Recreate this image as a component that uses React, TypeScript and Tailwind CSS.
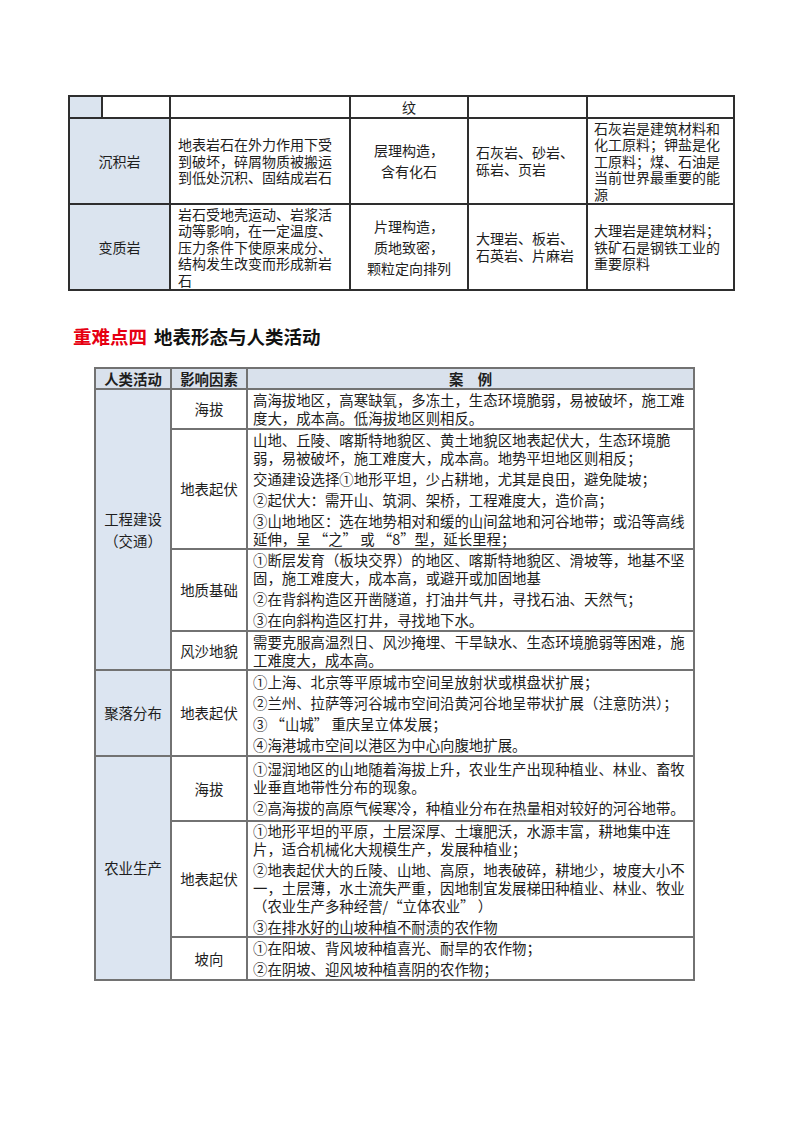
import React from 'react';

const font = { fontFamily: '"Noto Sans CJK SC", "Noto Sans", sans-serif' };

interface Factor {
  name: string;
  height: number;
  paras: string[][];
}

interface Activity {
  name: string[];
  factors: Factor[];
}

const activities: Activity[] = [
  {
    name: ['工程建设', '（交通）'],
    factors: [
      {
        name: '海拔',
        height: 40,
        paras: [['高海拔地区，高寒缺氧，多冻土，生态环境脆弱，易被破坏，施工难', '度大，成本高。低海拔地区则相反。']],
      },
      {
        name: '地表起伏',
        height: 120,
        paras: [
          ['山地、丘陵、喀斯特地貌区、黄土地貌区地表起伏大，生态环境脆', '弱，易被破坏，施工难度大，成本高。地势平坦地区则相反；'],
          ['交通建设选择①地形平坦，少占耕地，尤其是良田，避免陡坡；'],
          ['②起伏大：需开山、筑洞、架桥，工程难度大，造价高；'],
          ['③山地地区：选在地势相对和缓的山间盆地和河谷地带；或沿等高线', '延伸，呈 “之” 或 “8”型，延长里程；'],
        ],
      },
      {
        name: '地质基础',
        height: 82,
        paras: [
          ['①断层发育（板块交界）的地区、喀斯特地貌区、滑坡等，地基不坚', '固，施工难度大，成本高，或避开或加固地基'],
          ['②在背斜构造区开凿隧道，打油井气井，寻找石油、天然气；'],
          ['③在向斜构造区打井，寻找地下水。'],
        ],
      },
      {
        name: '风沙地貌',
        height: 39,
        paras: [['需要克服高温烈日、风沙掩埋、干旱缺水、生态环境脆弱等困难，施', '工难度大，成本高。']],
      },
    ],
  },
  {
    name: ['聚落分布'],
    factors: [
      {
        name: '地表起伏',
        height: 86,
        paras: [
          ['①上海、北京等平原城市空间呈放射状或棋盘状扩展；'],
          ['②兰州、拉萨等河谷城市空间沿黄河谷地呈带状扩展（注意防洪）；'],
          ['③ “山城” 重庆呈立体发展；'],
          ['④海港城市空间以港区为中心向腹地扩展。'],
        ],
      },
    ],
  },
  {
    name: ['农业生产'],
    factors: [
      {
        name: '海拔',
        height: 65,
        paras: [
          ['①湿润地区的山地随着海拔上升，农业生产出现种植业、林业、畜牧', '业垂直地带性分布的现象。'],
          ['②高海拔的高原气候寒冷，种植业分布在热量相对较好的河谷地带。'],
        ],
      },
      {
        name: '地表起伏',
        height: 114,
        paras: [
          ['①地形平坦的平原，土层深厚、土壤肥沃，水源丰富，耕地集中连', '片，适合机械化大规模生产，发展种植业；'],
          ['②地表起伏大的丘陵、山地、高原，地表破碎，耕地少，坡度大小不', '一，土层薄，水土流失严重，因地制宜发展梯田种植业、林业、牧业', '（农业生产多种经营/“立体农业” ）'],
          ['③在排水好的山坡种植不耐渍的农作物'],
        ],
      },
      {
        name: '坡向',
        height: 43,
        paras: [
          ['①在阳坡、背风坡种植喜光、耐旱的农作物；'],
          ['②在阴坡、迎风坡种植喜阴的农作物；'],
        ],
      },
    ],
  },
];

function Lines({ lines, className = '' }: { lines: string[]; className?: string }) {
  return (
    <div className={className}>
      {lines.map((l, i) => (
        <div key={i} className="whitespace-nowrap">{l}</div>
      ))}
    </div>
  );
}

export default function App() {
  const c1 = 'border-2 border-[#2e2e2e] align-middle';
  const c2 = 'border-2 border-[#727272] align-middle';

  return (
    <div className="w-[800px] h-[1132px] bg-white text-[#1e1e1e] pt-[95px]" style={font}>
      {/* 上页表格延续 */}
      <table className="ml-[68px] w-[665px] border-collapse table-fixed text-[14px] leading-[16.6px]">
        <colgroup>
          <col className="w-[33px]" />
          <col className="w-[68px]" />
          <col className="w-[180px]" />
          <col className="w-[118px]" />
          <col className="w-[119px]" />
          <col className="w-[147px]" />
        </colgroup>
        <tbody>
          <tr className="h-[22px]">
            <td className={`${c1} bg-[#dbe4ef]`}></td>
            <td className={c1}></td>
            <td className={c1}></td>
            <td className={`${c1} text-center`}>纹</td>
            <td className={c1}></td>
            <td className={c1}></td>
          </tr>
          <tr className="h-[86px]">
            <td colSpan={2} className={`${c1} bg-[#dbe4ef] text-center`}>沉积岩</td>
            <td className={`${c1} pl-[7px]`}>
              <Lines lines={['地表岩石在外力作用下受', '到破坏，碎屑物质被搬运', '到低处沉积、固结成岩石']} />
            </td>
            <td className={`${c1} text-center leading-[21px]`}>
              <Lines lines={['层理构造，', '含有化石']} />
            </td>
            <td className={`${c1} pl-[7px]`}>
              <Lines lines={['石灰岩、砂岩、', '砾岩、页岩']} />
            </td>
            <td className={`${c1} pl-[6px]`}>
              <Lines lines={['石灰岩是建筑材料和', '化工原料；钾盐是化', '工原料；煤、石油是', '当前世界最重要的能', '源']} />
            </td>
          </tr>
          <tr className="h-[86px]">
            <td colSpan={2} className={`${c1} bg-[#dbe4ef] text-center`}>变质岩</td>
            <td className={`${c1} pl-[7px]`}>
              <Lines lines={['岩石受地壳运动、岩浆活', '动等影响，在一定温度、', '压力条件下使原来成分、', '结构发生改变而形成新岩', '石']} />
            </td>
            <td className={`${c1} text-center leading-[21px]`}>
              <Lines lines={['片理构造，', '质地致密，', '颗粒定向排列']} />
            </td>
            <td className={`${c1} pl-[7px]`}>
              <Lines lines={['大理岩、板岩、', '石英岩、片麻岩']} />
            </td>
            <td className={`${c1} pl-[6px]`}>
              <Lines lines={['大理岩是建筑材料；', '铁矿石是钢铁工业的', '重要原料']} />
            </td>
          </tr>
        </tbody>
      </table>

      {/* 标题 */}
      <h2 className="mt-[33px] ml-[73px] flex items-center gap-[7px] text-[18.5px] leading-[24px] font-bold">
        <span className="text-[#e60012]">重难点四</span>
        <span className="text-[#111]">地表形态与人类活动</span>
      </h2>

      {/* 地表形态与人类活动 */}
      <table className="mt-[19px] ml-[94px] w-[599px] border-collapse table-fixed text-[14.4px] leading-[18px]">
        <colgroup>
          <col className="w-[76px]" />
          <col className="w-[76px]" />
          <col className="w-[447px]" />
        </colgroup>
        <thead>
          <tr className="h-[21px] bg-[#d9e1ec] font-bold">
            <th className={`${c2} text-center`}>人类活动</th>
            <th className={`${c2} text-center`}>影响因素</th>
            <th className={`${c2} text-center`}>案　例</th>
          </tr>
        </thead>
        <tbody>
          {activities.map((a) =>
            a.factors.map((f, fi) => (
              <tr key={a.name[0] + fi} style={{ height: f.height }}>
                {fi === 0 && (
                  <td rowSpan={a.factors.length} className={`${c2} bg-[#dce5f1] text-center leading-[22px]`}>
                    {a.name.map((n) => (
                      <div key={n}>{n}</div>
                    ))}
                  </td>
                )}
                <td className={`${c2} text-center`}>{f.name}</td>
                <td className={`${c2} pl-[5px]`}>
                  <div className="flex flex-col gap-[3px]">
                    {f.paras.map((p, pi) => (
                      <Lines key={pi} lines={p} />
                    ))}
                  </div>
                </td>
              </tr>
            ))
          )}
        </tbody>
      </table>
    </div>
  );
}
